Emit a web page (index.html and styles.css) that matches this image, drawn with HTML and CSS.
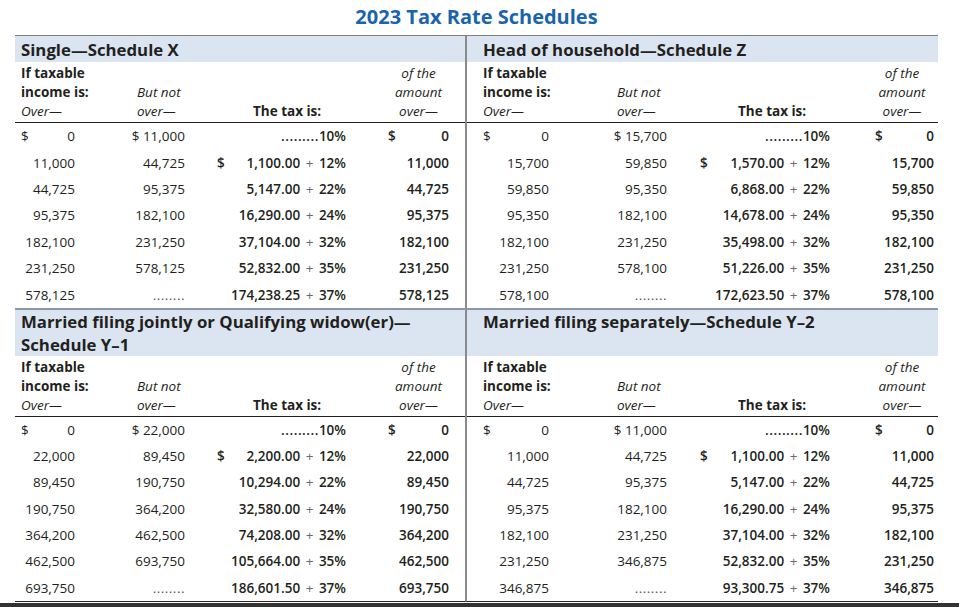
FILE: index.html
```html
<!DOCTYPE html>
<html lang="en">
<head>
<meta charset="utf-8">
<title>2023 Tax Rate Schedules</title>
<link rel="stylesheet" href="styles.css">
</head>
<body>
<div class="page">
  <h1 class="title">2023 Tax Rate Schedules</h1>
  <div class="sheet">
    <div class="band l">Single—Schedule X</div>
    <div class="band r">Head of household—Schedule Z</div>

    <div class="sched l top">
      <div class="head">
        <div class="h1"><b>If taxable</b><br><b>income is:</b><br><i>Over—</i></div>
        <div class="h2"><i>But not</i><br><i>over—</i></div>
        <div class="h3"><b>The tax is:</b></div>
        <div class="h4"><i>of the</i><br><i>amount</i><br><i>over—</i></div>
      </div>
      <div class="row"><div class="c1 split"><span>$</span><span>0</span></div><div class="c2">$ 11,000</div><div class="c3"><span class="dots">.........</span>10%</div><div class="c4 split"><span>$</span><span>0</span></div></div>
      <div class="row"><div class="c1">11,000</div><div class="c2">44,725</div><div class="c3 split"><span>$</span><span>1,100.00 <span class="plus">+</span> 12%</span></div><div class="c4">11,000</div></div>
      <div class="row"><div class="c1">44,725</div><div class="c2">95,375</div><div class="c3">5,147.00 <span class="plus">+</span> 22%</div><div class="c4">44,725</div></div>
      <div class="row"><div class="c1">95,375</div><div class="c2">182,100</div><div class="c3">16,290.00 <span class="plus">+</span> 24%</div><div class="c4">95,375</div></div>
      <div class="row"><div class="c1">182,100</div><div class="c2">231,250</div><div class="c3">37,104.00 <span class="plus">+</span> 32%</div><div class="c4">182,100</div></div>
      <div class="row"><div class="c1">231,250</div><div class="c2">578,125</div><div class="c3">52,832.00 <span class="plus">+</span> 35%</div><div class="c4">231,250</div></div>
      <div class="row"><div class="c1">578,125</div><div class="c2"><span class="dots light">........</span></div><div class="c3">174,238.25 <span class="plus">+</span> 37%</div><div class="c4">578,125</div></div>
    </div>

    <div class="sched r top">
      <div class="head">
        <div class="h1"><b>If taxable</b><br><b>income is:</b><br><i>Over—</i></div>
        <div class="h2"><i>But not</i><br><i>over—</i></div>
        <div class="h3"><b>The tax is:</b></div>
        <div class="h4"><i>of the</i><br><i>amount</i><br><i>over—</i></div>
      </div>
      <div class="row"><div class="c1 split"><span>$</span><span>0</span></div><div class="c2">$ 15,700</div><div class="c3"><span class="dots">.........</span>10%</div><div class="c4 split"><span>$</span><span>0</span></div></div>
      <div class="row"><div class="c1">15,700</div><div class="c2">59,850</div><div class="c3 split"><span>$</span><span>1,570.00 <span class="plus">+</span> 12%</span></div><div class="c4">15,700</div></div>
      <div class="row"><div class="c1">59,850</div><div class="c2">95,350</div><div class="c3">6,868.00 <span class="plus">+</span> 22%</div><div class="c4">59,850</div></div>
      <div class="row"><div class="c1">95,350</div><div class="c2">182,100</div><div class="c3">14,678.00 <span class="plus">+</span> 24%</div><div class="c4">95,350</div></div>
      <div class="row"><div class="c1">182,100</div><div class="c2">231,250</div><div class="c3">35,498.00 <span class="plus">+</span> 32%</div><div class="c4">182,100</div></div>
      <div class="row"><div class="c1">231,250</div><div class="c2">578,100</div><div class="c3">51,226.00 <span class="plus">+</span> 35%</div><div class="c4">231,250</div></div>
      <div class="row"><div class="c1">578,100</div><div class="c2"><span class="dots light">........</span></div><div class="c3">172,623.50 <span class="plus">+</span> 37%</div><div class="c4">578,100</div></div>
    </div>

    <div class="band band-2 l"><span class="bline">Married filing jointly or Qualifying widow(er)—</span><span class="bline">Schedule Y–1</span></div>
    <div class="band band-2 r"><span class="bline">Married filing separately—Schedule Y–2</span></div>

    <div class="sched l bottom">
      <div class="head">
        <div class="h1"><b>If taxable</b><br><b>income is:</b><br><i>Over—</i></div>
        <div class="h2"><i>But not</i><br><i>over—</i></div>
        <div class="h3"><b>The tax is:</b></div>
        <div class="h4"><i>of the</i><br><i>amount</i><br><i>over—</i></div>
      </div>
      <div class="row"><div class="c1 split"><span>$</span><span>0</span></div><div class="c2">$ 22,000</div><div class="c3"><span class="dots">.........</span>10%</div><div class="c4 split"><span>$</span><span>0</span></div></div>
      <div class="row"><div class="c1">22,000</div><div class="c2">89,450</div><div class="c3 split"><span>$</span><span>2,200.00 <span class="plus">+</span> 12%</span></div><div class="c4">22,000</div></div>
      <div class="row"><div class="c1">89,450</div><div class="c2">190,750</div><div class="c3">10,294.00 <span class="plus">+</span> 22%</div><div class="c4">89,450</div></div>
      <div class="row"><div class="c1">190,750</div><div class="c2">364,200</div><div class="c3">32,580.00 <span class="plus">+</span> 24%</div><div class="c4">190,750</div></div>
      <div class="row"><div class="c1">364,200</div><div class="c2">462,500</div><div class="c3">74,208.00 <span class="plus">+</span> 32%</div><div class="c4">364,200</div></div>
      <div class="row"><div class="c1">462,500</div><div class="c2">693,750</div><div class="c3">105,664.00 <span class="plus">+</span> 35%</div><div class="c4">462,500</div></div>
      <div class="row"><div class="c1">693,750</div><div class="c2"><span class="dots light">........</span></div><div class="c3">186,601.50 <span class="plus">+</span> 37%</div><div class="c4">693,750</div></div>
    </div>

    <div class="sched r bottom">
      <div class="head">
        <div class="h1"><b>If taxable</b><br><b>income is:</b><br><i>Over—</i></div>
        <div class="h2"><i>But not</i><br><i>over—</i></div>
        <div class="h3"><b>The tax is:</b></div>
        <div class="h4"><i>of the</i><br><i>amount</i><br><i>over—</i></div>
      </div>
      <div class="row"><div class="c1 split"><span>$</span><span>0</span></div><div class="c2">$ 11,000</div><div class="c3"><span class="dots">.........</span>10%</div><div class="c4 split"><span>$</span><span>0</span></div></div>
      <div class="row"><div class="c1">11,000</div><div class="c2">44,725</div><div class="c3 split"><span>$</span><span>1,100.00 <span class="plus">+</span> 12%</span></div><div class="c4">11,000</div></div>
      <div class="row"><div class="c1">44,725</div><div class="c2">95,375</div><div class="c3">5,147.00 <span class="plus">+</span> 22%</div><div class="c4">44,725</div></div>
      <div class="row"><div class="c1">95,375</div><div class="c2">182,100</div><div class="c3">16,290.00 <span class="plus">+</span> 24%</div><div class="c4">95,375</div></div>
      <div class="row"><div class="c1">182,100</div><div class="c2">231,250</div><div class="c3">37,104.00 <span class="plus">+</span> 32%</div><div class="c4">182,100</div></div>
      <div class="row"><div class="c1">231,250</div><div class="c2">346,875</div><div class="c3">52,832.00 <span class="plus">+</span> 35%</div><div class="c4">231,250</div></div>
      <div class="row"><div class="c1">346,875</div><div class="c2"><span class="dots light">........</span></div><div class="c3">93,300.75 <span class="plus">+</span> 37%</div><div class="c4">346,875</div></div>
    </div>
  </div>
</div>
<div class="edge"></div>
</body>
</html>
```
FILE: styles.css
```css
* { box-sizing: border-box; }

html, body {
  margin: 0;
  padding: 0;
  background: #ffffff;
}

body {
  width: 959px;
  height: 607px;
  overflow: hidden;
  font-family: "Open Sans", "Noto Sans", sans-serif;
  color: #231f20;
}

.page {
  margin-left: 15px;
  width: 923px;
}

.title {
  margin: 0;
  height: 35px;
  padding-bottom: 2px;
  line-height: 33px;
  text-align: center;
  font-size: 20px;
  font-weight: 700;
  font-stretch: 88%;
  color: #1a63ad;
}

.sheet {
  display: grid;
  grid-template-columns: 450px 473px;
  border-top: 1px solid #7d7d7d;
}

.l {
  --cols: 70px 110px 161px 109px;
  --p1: 6px;
  --p3l: 22px;
  --p4l: 32px;
  --p4r: 16px;
  --h2: 52px;
  --h3: 58px;
  --h4l: 26px;
  --h4r: 10px;
}

.r {
  --cols: 92px 118px 163px 98px;
  --p1: 16px;
  --p3l: 23px;
  --p4l: 35px;
  --p4r: 4px;
  --h2: 58px;
  --h3: 61px;
  --h4l: 26px;
  --h4r: 0px;
  border-left: 2px solid #8a8a8a;
}

.band {
  background: #dbe5f1;
  font-size: 16.8px;
  font-weight: 700;
  font-stretch: 88%;
  line-height: 20px;
  padding: 4px 6px 2px;
  white-space: nowrap;
}

.band.r { padding-left: 16px; }

.band-2 {
  padding-top: 0;
  padding-bottom: 0;
  line-height: 23px;
}

.bline { display: block; }

.sched.top { border-bottom: 2px solid #8b98a8; }
.sched.bottom { border-bottom: 1px solid #231f20; }

.head {
  display: grid;
  grid-template-columns: var(--cols);
  align-items: end;
  font-size: 13.5px;
  line-height: 19px;
  padding: 2px 0 1px;
  border-bottom: 1px solid #231f20;
  white-space: nowrap;
}

.head b { font-weight: 700; }
.head i { font-style: italic; font-weight: 400; }

.h1 { padding-left: var(--p1); }
.h2 { padding-left: var(--h2); }
.h3 { padding-left: var(--h3); }
.h4 {
  text-align: center;
  padding-left: var(--h4l);
  padding-right: var(--h4r);
}

.row {
  display: grid;
  grid-template-columns: var(--cols);
  align-items: center;
  height: 26.4px;
  font-size: 13.5px;
  white-space: nowrap;
}

.bottom .row { height: 26.3px; }

.c1 {
  padding: 0 10px 0 var(--p1);
  text-align: right;
}

.c2 {
  padding-right: 10px;
  text-align: right;
}

.c3 {
  padding: 0 10px 0 var(--p3l);
  text-align: right;
  font-weight: 600;
}

.c4 {
  padding: 0 var(--p4r) 0 var(--p4l);
  text-align: right;
  font-weight: 600;
}

.split {
  display: flex;
  justify-content: space-between;
}

.plus {
  font-weight: 400;
  color: #6b6b6b;
  margin: 0 2px;
}

.dots { letter-spacing: 0.5px; }
.dots.light { color: #555; }

.edge {
  margin-top: 1px;
  width: 959px;
  height: 6px;
  background: #333333;
}
```
